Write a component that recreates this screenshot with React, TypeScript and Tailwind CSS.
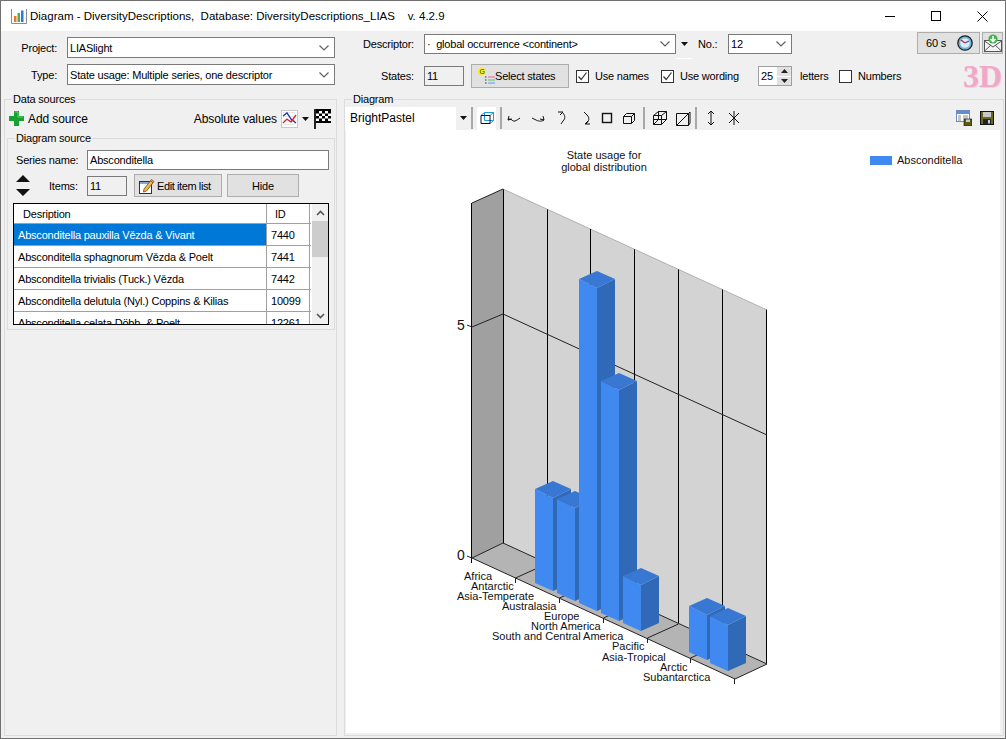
import React from "react";

const Chevron = () => (
  <svg width="12" height="8" viewBox="0 0 12 8" className="shrink-0">
    <path d="M1.5 1.5 L6 6 L10.5 1.5" fill="none" stroke="#606060" strokeWidth="1.2" />
  </svg>
);

const Caret = () => (
  <svg width="7" height="4" viewBox="0 0 7 4" className="shrink-0">
    <path d="M0 0 H7 L3.5 4 Z" fill="#111" />
  </svg>
);

const Select = ({ text, className }: { text: string; className: string }) => (
  <div className={`flex items-center justify-between bg-white border border-[#7a7a7a] pl-[2px] pr-[4px] ${className}`}>
    <span className="whitespace-pre">{text}</span>
    <Chevron />
  </div>
);

const Check = ({ checked }: { checked?: boolean }) => (
  <div className="w-[13px] h-[13px] bg-white border border-[#333] flex items-center justify-center shrink-0">
    {checked && (
      <svg width="11" height="11" viewBox="0 0 11 11">
        <path d="M1.5 5.5 L4.2 8.5 L9.5 1.5" fill="none" stroke="#333" strokeWidth="1.2" />
      </svg>
    )}
  </div>
);

const TitleIcon = () => (
  <svg width="16" height="16" viewBox="0 0 16 16">
    <path d="M.5 1 V15.5 H15.5 V1" fill="none" stroke="#8a8a8a" />
    <rect x="3" y="8" width="2.5" height="6" fill="#e8772e" />
    <rect x="6.5" y="5" width="2.5" height="9" fill="#4caf50" />
    <rect x="10" y="2.5" width="2.5" height="11.5" fill="#2b7cd3" />
  </svg>
);

const Plus = () => (
  <svg width="15" height="15" viewBox="0 0 15 15">
    <path d="M5 0 H10 V5 H15 V10 H10 V15 H5 V10 H0 V5 H5 Z" fill="#19a033" />
    <path d="M6 1 H9 V6 H14" fill="none" stroke="#5fd070" />
  </svg>
);

const LineChart = () => (
  <svg width="17" height="18" viewBox="0 0 17 18">
    <rect x=".5" y=".5" width="16" height="17" fill="#fff" stroke="#999" strokeDasharray="1 1" />
    <path d="M2.5 2.5h12M2.5 6.5h12M2.5 10.5h12M2.5 14.5h12" stroke="#ccc" strokeDasharray="1 1" />
    <path d="M2 6 L6 3 L10 9 L15 13" fill="none" stroke="#1c2fb0" strokeWidth="1.3" />
    <path d="M2 13 L6 9 L10 12 L15 5" fill="none" stroke="#e0242c" strokeWidth="1.3" />
  </svg>
);

const Flag = () => (
  <svg width="17" height="20" viewBox="0 0 17 20">
    <rect x="0" y="0" width="2" height="20" fill="#222" />
    <rect x="2" y="0" width="15" height="14" fill="#000" />
    <path d="M5 2h3v2.5H5zM11 2h3v2.5h-3zM2 4.5h3V7H2zM8 4.5h3V7H8zM14 4.5h3V7h-3zM5 7h3v2.5H5zM11 7h3v2.5h-3zM2 9.5h3V12H2zM8 9.5h3V12H8zM14 9.5h3V12h-3z" fill="#fff" />
  </svg>
);

const UpDown = () => (
  <svg width="14" height="21" viewBox="0 0 14 21">
    <path d="M7 0 L14 7 H0 Z M0 14 H14 L7 21 Z" fill="#111" />
  </svg>
);

const SelectIcon = () => (
  <svg width="18" height="18" viewBox="0 0 18 18">
    <circle cx="4.5" cy="4.5" r="3.8" fill="#f4f02a" />
    <text x="2.4" y="7" fontSize="7" fill="#333">G</text>
    <path d="M8 10h1.5M8 13h1.5M8 16h1.5" stroke="#333" />
    <rect x="11" y="9" width="7" height="2" fill="#e8a0b8" />
    <rect x="11" y="12" width="7" height="2" fill="#9ed0a0" />
    <rect x="11" y="15" width="7" height="2" fill="#9cc0e4" />
  </svg>
);

const EditIcon = () => (
  <svg width="16" height="16" viewBox="0 0 16 16">
    <rect x=".5" y="3.5" width="12" height="12" fill="#fff" stroke="#1d2f70" />
    <rect x="1" y="4" width="11" height="2" fill="#7fa8e0" />
    <path d="M5 11 L12.5 1.5 L15 3.5 L7.5 13 L4.5 14 Z" fill="#f0b848" stroke="#6a4a18" strokeWidth=".8" />
    <path d="M11.5 2.7 L14 4.7" stroke="#c04030" />
  </svg>
);

const Clock = () => (
  <svg width="16" height="16" viewBox="0 0 16 16">
    <circle cx="8" cy="8" r="7.2" fill="#6fb0dc" stroke="#222" strokeWidth="1.3" />
    <circle cx="8" cy="8" r="4.8" fill="#d8ecf8" />
    <path d="M8 8 L4 5" stroke="#d8232a" strokeWidth="1.3" />
    <path d="M8 8 L12 6" stroke="#2b5e94" strokeWidth="1.3" />
  </svg>
);

const Mail = () => (
  <svg width="18" height="18" viewBox="0 0 18 18">
    <rect x=".5" y="6.5" width="17" height="11" fill="#f4f4f4" stroke="#555" />
    <path d="M.5 17 L7 11 M17.5 17 L11 11 M.5 7 L9 13 L17.5 7" fill="none" stroke="#555" />
    <circle cx="9" cy="5" r="4.6" fill="#3fb44a" />
    <path d="M9 2 V7 M6.5 5 L9 7.6 L11.5 5" fill="none" stroke="#fff" strokeWidth="1.5" />
  </svg>
);

const I = ({ children }: { children: React.ReactNode }) => (
  <svg width="16" height="16" viewBox="0 0 16 16" fill="none" stroke="#111" strokeWidth="1">
    {children}
  </svg>
);

const Sep = ({ className = "" }: { className?: string }) => <div className={`w-[2px] h-[22px] bg-[#a8a8a8] shrink-0 ${className}`} />;

const Tool = ({ w = 24, className = "", children }: { w?: 22 | 24; className?: string; children: React.ReactNode }) => (
  <div className={`${w === 24 ? "w-[24px]" : "w-[22px]"} h-[23px] flex items-center justify-center shrink-0 ${className}`}>{children}</div>
);

const FloppyIcon = () => (
  <svg width="14" height="14" viewBox="0 0 14 14">
    <rect x=".5" y=".5" width="13" height="13" fill="#6a6a1a" stroke="#111" />
    <rect x="3" y="1" width="8" height="5" fill="#c8c8c8" />
    <rect x="3" y="8" width="8" height="5.5" fill="#222" />
    <rect x="8" y="9" width="2" height="3.5" fill="#ccc" />
  </svg>
);

const FormSave = () => (
  <svg width="16" height="16" viewBox="0 0 16 16">
    <rect x=".5" y=".5" width="13" height="11" fill="#fff" stroke="#6a8cc0" />
    <rect x="1" y="1" width="12" height="3" fill="#5d8fd8" />
    <path d="M2 6h3M2 8h3M2 10h3M7 6h5M7 8h5" stroke="#8a8a8a" />
    <rect x="8" y="9" width="8" height="7" fill="#5a5a14" stroke="#111" strokeWidth=".6" />
    <rect x="10" y="9.5" width="4" height="2.5" fill="#ccc" />
  </svg>
);

const rows: [string, string][] = [
  ["Absconditella pauxilla Vězda & Vivant", "7440"],
  ["Absconditella sphagnorum Vězda & Poelt", "7441"],
  ["Absconditella trivialis (Tuck.) Vězda", "7442"],
  ["Absconditella delutula (Nyl.) Coppins & Kilias", "10099"],
  ["Absconditella celata Döbb. & Poelt", "12261"],
];

const bars = [
  [535, 489, 583],
  [557, 499, 593],
  [579, 279, 603],
  [601, 381, 613],
  [623, 576, 623],
  [689, 606, 652],
  [710, 616, 663],
];

const labels: [string, number, number][] = [
  ["Africa", 464, 580],
  ["Antarctic", 471, 590],
  ["Asia-Temperate", 457, 600],
  ["Australasia", 502, 610],
  ["Europe", 544, 620],
  ["North America", 531, 630],
  ["South and Central America", 492, 640],
  ["Pacific", 612, 650],
  ["Asia-Tropical", 602, 661],
  ["Arctic", 660, 671],
  ["Subantarctica", 643, 681],
];

const Chart = () => (
  <svg viewBox="346 130 654 603" className="w-full h-full block">
    <polygon points="472,203 503,189 503,543 472,558" fill="#a0a0a0" />
    <polygon points="503,189 767,310 767,664 503,543" fill="#d3d3d3" />
    <polygon points="472,558 503,543 767,664 735,679" fill="#b4b4b4" />
    <line x1="503" y1="189" x2="767" y2="310" stroke="#b0b0b0" />
    <line x1="471.5" x2="471.5" y1="203" y2="563" stroke="#000" />
    {[503.5, 547.5, 590.5, 634.5, 678.5, 722.5, 766.5].map((x) => (
      <line key={x} x1={x} x2={x} y1={189 + (x - 503) * 0.458} y2={543 + (x - 503) * 0.458} stroke="#000" />
    ))}
    <path d="M472 203 L503 189" stroke="#222" fill="none" />
    <path d="M467 325 L472 327 L503 314 L767 435" stroke="#222" fill="none" />
    <path d="M467 556 L472 558 L503 543 L767 664 L735 679 L472 558" stroke="#222" fill="none" />
    {[
      [515.5, 578],
      [559.5, 598],
      [603.5, 618],
      [647.5, 638],
      [690.5, 658],
    ].map(([x, y]) => (
      <path key={x} d={`M${x} ${y + 5} V${y} L${x + 31} ${y - 14}`} stroke="#222" fill="none" />
    ))}
    <line x1="734.5" x2="734.5" y1="679" y2="684" stroke="#222" />
    {bars.map(([x, t, b]) => (
      <g key={x}>
        <polygon points={`${x + 18},${t + 9} ${x + 36},${t} ${x + 36},${b} ${x + 18},${b + 8}`} fill="#3069b7" />
        <polygon points={`${x},${t} ${x + 18},${t + 9} ${x + 18},${b + 8} ${x},${b}`} fill="#4089f0" />
        <polygon points={`${x},${t} ${x + 18},${t - 8} ${x + 36},${t} ${x + 18},${t + 9}`} fill="#3878d2" />
      </g>
    ))}
    <g fontSize="11" fill="#111">
      {labels.map(([s, x, y]) => (
        <text key={s} x={x} y={y}>
          {s}
        </text>
      ))}
      <text x="457" y="330" fontSize="14">5</text>
      <text x="457" y="560" fontSize="14">0</text>
      <text x="604" y="159" textAnchor="middle">State usage for</text>
      <text x="604" y="171" textAnchor="middle">global distribution</text>
      <rect x="870" y="156" width="22" height="9" fill="#4089f0" />
      <text x="897" y="164">Absconditella</text>
    </g>
  </svg>
);

export default function App() {
  return (
    <div className="w-[1006px] h-[739px] flex flex-col bg-[#f0f0f0] border border-[#707070] text-[11px] tracking-[-0.2px] leading-[14px] text-black overflow-hidden [font-family:'Liberation_Sans',sans-serif]">
      {/* Title bar */}
      <div className="h-[30px] bg-white flex items-center shrink-0 pl-[10px]">
        <TitleIcon />
        <span className="ml-[3px] whitespace-pre text-[11.5px] tracking-normal">Diagram - DiversityDescriptions,  Database: DiversityDescriptions_LIAS    v. 4.2.9</span>
        <div className="ml-auto flex items-center">
          <div className="w-[46px] flex justify-center"><div className="w-[10px] h-px bg-black" /></div>
          <div className="w-[46px] flex justify-center"><div className="w-[10px] h-[10px] border border-black" /></div>
          <div className="w-[46px] flex justify-center">
            <svg width="11" height="11" viewBox="0 0 11 11"><path d="M.5 .5 L10.5 10.5 M10.5 .5 L.5 10.5" stroke="#000" /></svg>
          </div>
        </div>
      </div>

      {/* Header form */}
      <div className="h-[61px] flex shrink-0">
        <div className="w-[339px] pt-[6px] flex flex-col gap-[6px] shrink-0">
          <div className="flex items-center">
            <span className="w-[56px] text-right">Project:</span>
            <Select text="LIASlight" className="ml-[10px] w-[268px] h-[21px]" />
          </div>
          <div className="flex items-center">
            <span className="w-[56px] text-right">Type:</span>
            <Select text="State usage: Multiple series, one descriptor" className="ml-[10px] w-[268px] h-[21px]" />
          </div>
        </div>
        <div className="flex-1 flex flex-col">
          <div className="h-[23px] flex items-end pt-[1px]">
            <span className="ml-[23px] w-[50px] mb-[3px] whitespace-nowrap">Descriptor:</span>
            <Select text="·  global occurrence <continent>" className="ml-[11px] w-[252px] h-[20px]" />
            <div className="relative w-[16px] h-[20px] flex items-center justify-center">
              <Caret />
              <div className="absolute left-0 right-0 top-[24px] h-px bg-white" />
            </div>
            <span className="ml-[6px] w-[30px] mb-[3px]">No.:</span>
            <Select text="12" className="w-[64px] h-[20px]" />
            <div className="ml-[125px] w-[63px] h-[22px] bg-[#e1e1e1] border border-[#adadad] flex items-center pl-[8px] gap-[10px]">
              <span className="w-[21px]">60 s</span>
              <Clock />
            </div>
            <div className="ml-[2px] w-[21px] h-[22px] bg-[#e1e1e1] border border-[#adadad] flex items-center justify-center">
              <Mail />
            </div>
          </div>
          <div className="h-[24px] mt-[10px] flex items-center">
            <span className="ml-[41px] w-[32px]">States:</span>
            <div className="ml-[11px] w-[40px] h-[20px] bg-[#f0f0f0] border border-[#7a7a7a] flex items-center pl-[2px]">11</div>
            <div className="ml-[7px] w-[98px] h-[24px] bg-[#e1e1e1] border border-[#adadad] flex items-center pl-[5px]">
              <SelectIcon />
              <span>Select states</span>
            </div>
            <div className="ml-[7px]"><Check checked /></div>
            <span className="ml-[6px] w-[66px] whitespace-nowrap">Use names</span>
            <Check checked />
            <span className="ml-[6px] w-[78px] whitespace-nowrap">Use wording</span>
            <div className="w-[34px] h-[20px] bg-white border border-[#a0a0a0] flex items-center justify-between pl-[2px]">
              <span>25</span>
              <div className="w-[14px] h-full flex flex-col gap-px bg-white">
                <div className="flex-1 bg-[#e1e1e1] flex items-center justify-center"><Caret2 up /></div>
                <div className="flex-1 bg-[#e1e1e1] flex items-center justify-center"><Caret2 /></div>
              </div>
            </div>
            <span className="ml-[8px] w-[39px]">letters</span>
            <Check />
            <span className="ml-[6px] w-[60px]">Numbers</span>
            <span className="ml-[45px] text-[32px] leading-[24px] tracking-normal font-bold text-[#f0a8c8] [font-family:'Liberation_Serif',serif] [text-shadow:1px_1px_0_#f8d0e0]">3D</span>
          </div>
        </div>
      </div>

      {/* Main */}
      <div className="flex-1 flex min-h-0">
        <fieldset className="ml-[3px] w-[333px] mb-[2px] border border-[#dcdcdc] min-w-0">
          <legend className="ml-[7px] px-[1px]">Data sources</legend>
          <div className="h-[25px] flex items-center pl-[4px] pr-[5px] text-[12px] tracking-[-0.1px]">
            <Plus />
            <span className="ml-[4px]">Add source</span>
            <span className="ml-auto">Absolute values</span>
            <span className="ml-[4px]"><LineChart /></span>
            <span className="ml-[4px]"><Caret /></span>
            <span className="ml-[5px]"><Flag /></span>
          </div>
          <fieldset className="ml-[2px] mr-[1px] h-[199px] border border-[#dcdcdc] px-[5px] min-w-0">
            <legend className="ml-[2px] px-[1px]">Diagram source</legend>
            <div className="flex items-center mt-[5px]">
              <span className="ml-[3px] w-[71px]">Series name:</span>
              <div className="w-[242px] h-[20px] bg-white border border-[#7a7a7a] flex items-center pl-[2px]">Absconditella</div>
            </div>
            <div className="flex items-center mt-[4px] h-[23px]">
              <div className="ml-[3px]"><UpDown /></div>
              <span className="ml-[19px] w-[38px]">Items:</span>
              <div className="w-[40px] h-[20px] bg-[#f0f0f0] border border-[#7a7a7a] flex items-center pl-[2px]">11</div>
              <div className="ml-[7px] w-[88px] h-[23px] bg-[#e1e1e1] border border-[#adadad] flex items-center pl-[4px] gap-[2px]">
                <EditIcon />
                <span className="tracking-[-0.4px]">Edit item list</span>
              </div>
              <div className="ml-[5px] w-[72px] h-[23px] bg-[#e1e1e1] border border-[#adadad] flex items-center justify-center">Hide</div>
            </div>
            <div className="mt-[6px] w-[316px] h-[122px] border border-black bg-white flex overflow-hidden">
              <div className="w-[297px] shrink-0">
                <div className="h-[20px] flex border-b border-[#a0a0a0]">
                  <div className="w-[253px] pl-[9px] border-r border-[#a0a0a0] flex items-center">Desription</div>
                  <div className="w-[43px] pl-[8px] border-r border-[#a0a0a0] flex items-center">ID</div>
                </div>
                {rows.map(([name, id], i) => (
                  <div key={id} className="h-[22px] flex border-b border-[#a0a0a0]">
                    <div className={`w-[253px] pl-[4px] border-r border-[#a0a0a0] flex items-center whitespace-nowrap ${i === 0 ? "bg-[#0078d7] text-white" : ""}`}>{name}</div>
                    <div className="w-[43px] pl-[4px] border-r border-[#a0a0a0] flex items-center">{id}</div>
                  </div>
                ))}
              </div>
              <div className="w-[17px] ml-[1px] bg-[#f0f0f0] flex flex-col shrink-0">
                <div className="h-[17px] flex items-center justify-center">
                  <svg width="9" height="6" viewBox="0 0 9 6"><path d="M1 5 L4.5 1.5 L8 5" fill="none" stroke="#555" strokeWidth="1.6" /></svg>
                </div>
                <div className="h-[36px] bg-[#cdcdcd]" />
                <div className="mt-auto h-[17px] flex items-center justify-center">
                  <svg width="9" height="6" viewBox="0 0 9 6"><path d="M1 1 L4.5 4.5 L8 1" fill="none" stroke="#555" strokeWidth="1.6" /></svg>
                </div>
              </div>
            </div>
          </fieldset>
        </fieldset>

        <fieldset className="ml-[7px] w-[660px] mb-[2px] border border-[#dcdcdc] min-w-0">
          <legend className="ml-[7px] px-[1px]">Diagram</legend>
          <div className="h-[24px] flex items-center">
            <div className="w-[126px] h-[23px] bg-white flex items-center shrink-0 text-[12px] tracking-normal">
              <span className="pl-[5px] flex-1">BrightPastel</span>
              <div className="w-[15px] h-full bg-[#f0f0f0] flex items-center justify-center"><Caret /></div>
            </div>
            <Sep />
            <div className="ml-[4px] w-[19px] h-[23px] bg-white flex items-center justify-center shrink-0">
              <I>
                <path d="M5.5 2.5 H14.5 V10.5 H5.5 Z M2 5.5 L5.5 2.5 M14.5 2.5 L11 5.5 M14.5 10.5 L11 13.5" stroke="#1c9cd8" />
                <path d="M2 5.5 H11 V13.5 H2 Z" />
              </I>
            </div>
            <Sep className="ml-[4px]" />
            <Tool>
              <I><path d="M3 6 L2 10 L6 9 M2 10 C5 7 6 12 9 11 C11 10.5 12 9 14 8" /></I>
            </Tool>
            <Tool>
              <I><path d="M13 6 L14 10 L10 9 M14 10 C11 12 8 11 6 10 C5 9.5 3 8.5 2 8" /></I>
            </Tool>
            <Tool>
              <I><path d="M4 2 L9 2 L6 5 M8 2 C11 5 12 8 9 11 C8 12 8 13 7 14" /></I>
            </Tool>
            <Tool>
              <I><path d="M12 14 L7 14 L10 11 M8 14 C11 11 12 8 9 5 C8 4 7 3 6 2" /></I>
            </Tool>
            <Tool w={22} className="-ml-[2px]">
              <I><rect x="3.5" y="3.5" width="9" height="9" strokeWidth="1.4" /></I>
            </Tool>
            <Tool w={22}>
              <I><path d="M2.5 6.5 H10.5 V13.5 H2.5 Z M2.5 6.5 L5.5 3.5 H13.5 V10.5 L10.5 13.5 M10.5 6.5 L13.5 3.5" /></I>
            </Tool>
            <Sep className="ml-[3px]" />
            <Tool className="ml-[3px]">
              <I><path d="M6.5 1.5 H14.5 V9.5 H6.5 Z M1.5 5.5 H9.5 V14.5 H1.5 Z M1.5 5.5 L6.5 1.5 M9.5 5.5 L14.5 1.5 M9.5 14.5 L14.5 9.5 M1.5 14.5 L6.5 9.5 V1.5 M1.5 9.5 H14.5" /></I>
            </Tool>
            <Tool w={22}>
              <I><path d="M1.5 3.5 H13.5 V15.5 H1.5 Z M13.5 3.5 L15 2 V13 L13.5 15.5 M1.5 15.5 L13.5 3.5" /></I>
            </Tool>
            <Sep className="ml-[1px]" />
            <Tool w={22} className="ml-[3px]">
              <I><path d="M8 1 V15 M5 4 L8 1 L11 4 M5 12 L8 15 L11 12" /></I>
            </Tool>
            <Tool>
              <I><path d="M8 1 V15 M3 3 L8 8 L13 3 M3 13 L8 8 L13 13" /></I>
            </Tool>
            <div className="ml-auto flex mr-[5px]">
              <Tool w={24}><FormSave /></Tool>
              <Tool w={22}><FloppyIcon /></Tool>
            </div>
          </div>
          <div className="ml-[1px] w-[654px] h-[603px] bg-white tracking-normal">
            <Chart />
          </div>
        </fieldset>
      </div>
    </div>
  );
}

function Caret2({ up }: { up?: boolean }) {
  return (
    <svg width="7" height="4" viewBox="0 0 7 4">
      <path d={up ? "M3.5 0 L7 4 H0 Z" : "M0 0 H7 L3.5 4 Z"} fill="#222" />
    </svg>
  );
}
